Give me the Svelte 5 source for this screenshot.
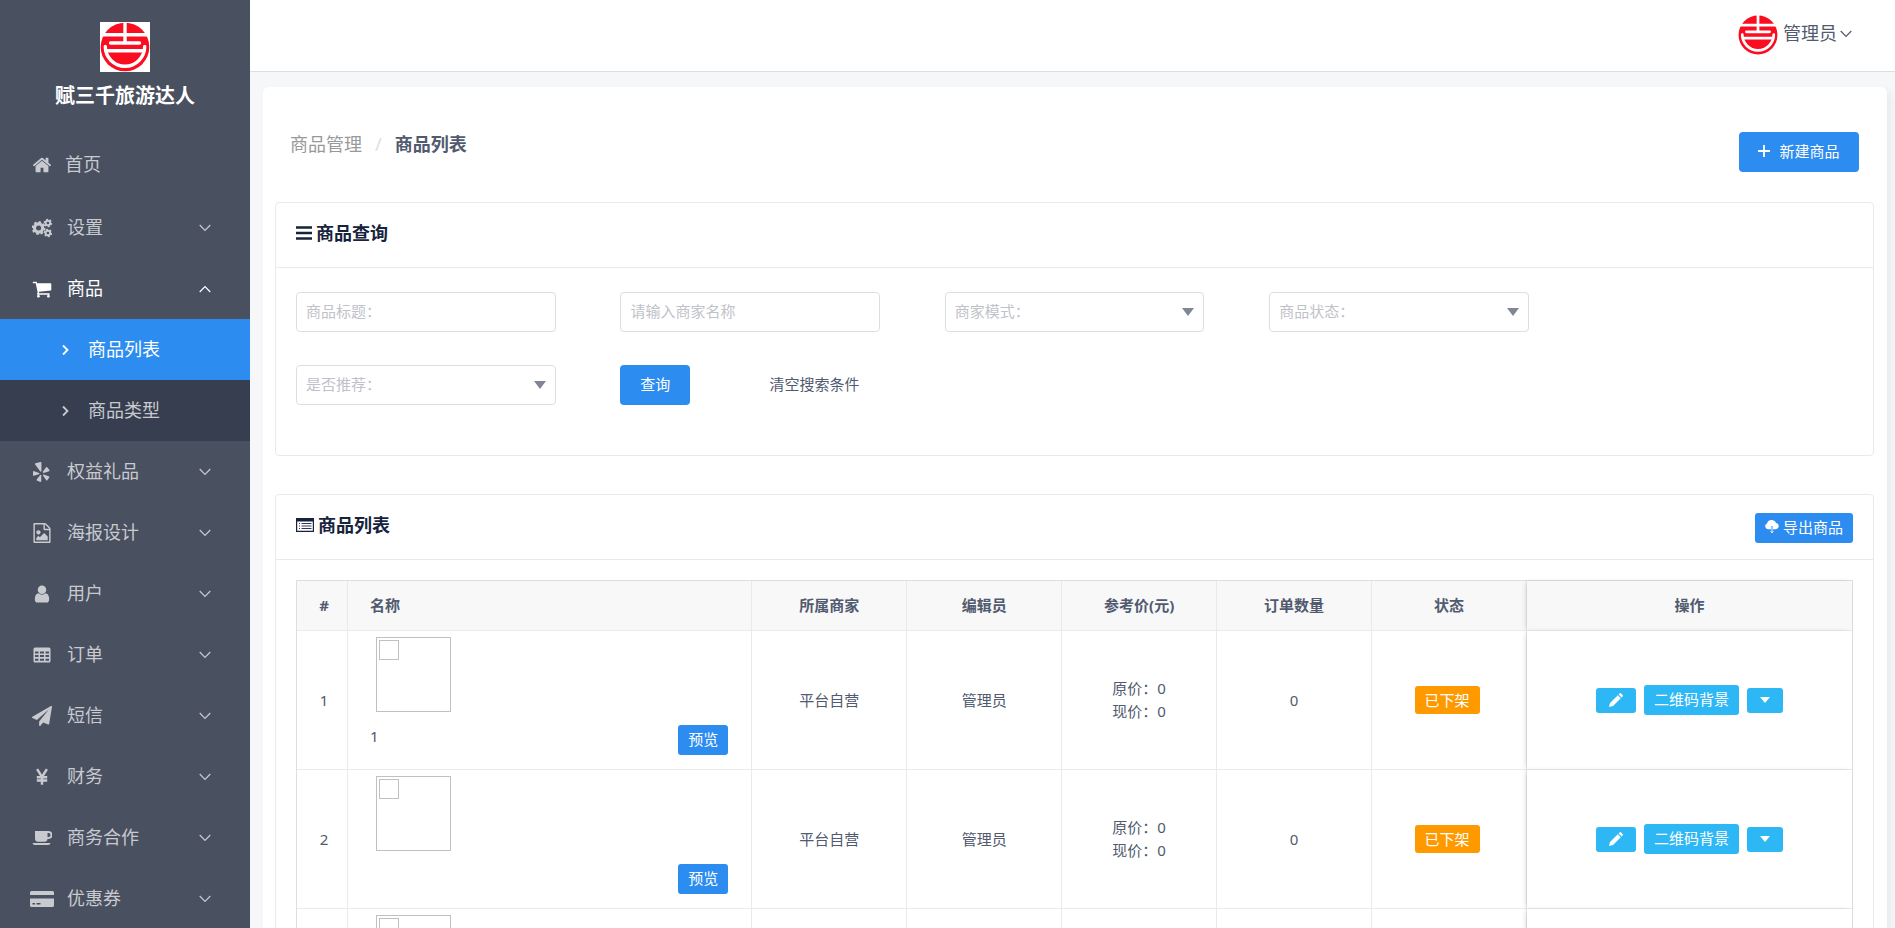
<script lang="ts">
  type MenuItem = { icon: string; label: string; open?: boolean; children?: string[] };

  const menu: MenuItem[] = [
    { icon: 'cogs', label: '设置' },
    { icon: 'cart', label: '商品', open: true, children: ['商品列表', '商品类型'] },
    { icon: 'yelp', label: '权益礼品' },
    { icon: 'image', label: '海报设计' },
    { icon: 'user', label: '用户' },
    { icon: 'table', label: '订单' },
    { icon: 'plane', label: '短信' },
    { icon: 'yen', label: '财务' },
    { icon: 'coffee', label: '商务合作' },
    { icon: 'card', label: '优惠券' }
  ];

  let active = $state('商品列表');
  let title = $state('');
  let merchant = $state('');
  let mode = $state('');
  let status = $state('');
  let recommend = $state('');

  const goods = [
    { id: 1, name: '1', shop: '平台自营', editor: '管理员', price: 0, now: 0, orders: 0, status: '已下架' },
    { id: 2, name: '', shop: '平台自营', editor: '管理员', price: 0, now: 0, orders: 0, status: '已下架' },
    { id: 3, name: '', shop: '平台自营', editor: '管理员', price: 0, now: 0, orders: 0, status: '已下架' }
  ];

  function resetSearch() {
    title = '';
    merchant = '';
    mode = '';
    status = '';
    recommend = '';
  }
</script>

{#snippet logo()}
  <svg viewBox="0 0 50 50" aria-hidden="true">
    <circle cx="25" cy="25" r="24.3" fill="#fb0d20" />
    <g fill="none" stroke="#fff" stroke-width="3.4">
      <path d="M25 0v20M1 12.7h48" />
      <path d="M10.5 21h29M7 28.800h36" stroke-linecap="round" />
      <path d="M5.300 24.500a19.700 19.700 0 0 0 39.400 0" stroke-linecap="round" />
    </g>
  </svg>
{/snippet}

{#snippet chevron(up: boolean)}
  <svg class="chevron" viewBox="0 0 12 8" aria-hidden="true">
    <path d={up ? 'M.7 7 6 1.500 11.300 7' : 'M.7 1 6 6.500 11.300 1'} fill="none" stroke="currentColor" stroke-width="1.200" />
  </svg>
{/snippet}

{#snippet select(id: string, label: string, value: string, set: (v: string) => void, options: string[])}
  <div class="field">
    <select {id} aria-label={label} {value} onchange={(e) => set(e.currentTarget.value)}>
      <option value="">{label}</option>
      {#each options as opt}
        <option>{opt}</option>
      {/each}
    </select>
    <svg class="caret" viewBox="0 0 12 8" aria-hidden="true"><path d="M0 0h12L6 8z" fill="#808695" /></svg>
  </div>
{/snippet}

{#snippet icon(name: string)}
  {#if name === 'home'}
    <svg viewBox="0 0 1792 1792"><path d="M1472 992v480q0 26-19 45t-45 19h-384v-384h-256v384h-384q-26 0-45-19t-19-45v-480q0-1 .5-3t.5-3l575-474 575 474q1 2 1 6zm223-69l-62 74q-8 9-21 11h-3q-13 0-21-7l-692-577-692 577q-12 8-24 7-13-2-21-11l-62-74q-8-10-7-23.500t11-21.500l719-599q32-26 76-26t76 26l244 204v-195q0-14 9-23t23-9h192q14 0 23 9t9 23v408l219 182q10 8 11 21.500t-7 23.500z" /></svg>
  {:else if name === 'cogs'}
    <svg viewBox="0 0 20 18">
      <g fill="none" stroke="currentColor">
        <circle cx="6.600" cy="9" r="4.100" stroke-width="3.200" />
        <circle cx="6.600" cy="9" r="6" stroke-width="1.800" pathLength="16" stroke-dasharray="1.100 .900" />
        <circle cx="15.900" cy="4" r="2.300" stroke-width="1.900" />
        <circle cx="15.900" cy="4" r="3.600" stroke-width="1.200" pathLength="12" stroke-dasharray="1.100 .900" />
        <circle cx="15.900" cy="14" r="2.300" stroke-width="1.900" />
        <circle cx="15.900" cy="14" r="3.600" stroke-width="1.200" pathLength="12" stroke-dasharray="1.100 .900" />
      </g>
    </svg>
  {:else if name === 'cart'}
    <svg viewBox="0 0 1792 1792"><path d="M704 1536q0 52-38 90t-90 38-90-38-38-90 38-90 90-38 90 38 38 90zm896 0q0 52-38 90t-90 38-90-38-38-90 38-90 90-38 90 38 38 90zm128-1088v512q0 24-16.500 42.500t-40.500 21.500l-1044 122q13 60 13 70 0 16-24 64h920q26 0 45 19t19 45-19 45-45 19h-1024q-26 0-45-19t-19-45q0-11 8-31.500t16-36 21.500-40 15.500-29.500l-177-823h-204q-26 0-45-19t-19-45 19-45 45-19h256q16 0 28.500 6.500t19.500 15.500 13 24.500 8 26 5.500 29.500 4.500 26h1201q26 0 45 19t19 45z" /></svg>
  {:else if name === 'yelp'}
    <svg viewBox="1 0 17 18">
      <path d="M3.600 1.200 8 0q1-.1 1 .9v7q-.2 1.300-1.200.4L3.200 2q-.2-.6.400-.8z" />
      <path d="M2 8.200 6.800 10q1 .6 0 1.100L2.200 12.400q-.8 0-.8-.8V8.800q.1-.6.600-.6z" />
      <path d="M8.800 12v5.300q-.1.700-.9.600l-3-1.200q-.6-.4-.2-1l3.200-4q.8-.6.900.3z" />
      <path d="m10.900 11.300 4.700 1.600q.7.300.4 1l-1.700 2.600q-.5.500-1 0l-2.900-4.300q-.3-1 .5-.9z" />
      <path d="m10.200 8.800 3-4q.5-.5 1 0l2 2.500q.3.700-.3 1l-4.800 1.500q-1.200 0-.9-1z" />
    </svg>
  {:else if name === 'image'}
    <svg viewBox="0 0 1792 1792"><path d="M1596 380q28 28 48 76t20 88v1152q0 40-28 68t-68 28h-1344q-40 0-68-28t-28-68v-1600q0-40 28-68t68-28h896q40 0 88 20t76 48zm-444-244v376h376q-10-29-22-41l-313-313q-12-12-41-22zm384 1528v-1024h-416q-40 0-68-28t-28-68v-416h-768v1536h1280zm-128-448v320h-1024v-192l192-192 128 128 384-384zm-832-192q-80 0-136-56t-56-136 56-136 136-56 136 56 56 136-56 136-136 56z" /></svg>
  {:else if name === 'user'}
    <svg viewBox="0 0 1792 1792"><path d="M1536 1399q0 109-62.500 187t-150.500 78h-854q-88 0-150.500-78t-62.500-187q0-85 8.500-160.500t31.500-152 58.500-131 94-89 134.500-34.500q131 128 313 128t313-128q76 0 134.500 34.500t94 89 58.500 131 31.500 152 8.500 160.500zm-256-887q0 159-112.500 271.500t-271.500 112.500-271.500-112.500-112.500-271.500 112.500-271.500 271.500-112.500 271.500 112.500 112.500 271.500z" /></svg>
  {:else if name === 'table'}
    <svg viewBox="-1 -1 20 20"><path fill-rule="evenodd" d="M2 1.500h14A1.500 1.500 0 0 1 17.500 3v12a1.500 1.500 0 0 1-1.500 1.500H2A1.500 1.500 0 0 1 .5 15V3A1.500 1.500 0 0 1 2 1.500zM2 5.500v2h3.500v-2zm5 0v2h4v-2zm5.500 0v2H16v-2zM2 9v2h3.500V9zm5 0v2h4V9zm5.500 0v2H16V9zM2 12.800v2h3.500v-2zm5 0v2h4v-2zm5.500 0v2H16v-2z" /></svg>
  {:else if name === 'plane'}
    <svg viewBox="0 0 1792 1792"><path d="M1764 11q33 24 27 64l-256 1536q-5 29-32 45-14 8-31 8-11 0-24-5l-453-185-242 295q-18 23-49 23-13 0-22-4-19-7-30.500-23.500t-11.500-36.500v-349l864-1059-1069 925-395-162q-37-14-40-55-2-40 32-59l1664-960q15-9 32-9 20 0 36 11z" /></svg>
  {:else if name === 'yen'}
    <svg viewBox="0 0 18 18"><path d="m4.600 2 4.400 7 4.400-7M9 8.500V16M4.300 9.300h9.400M4.300 12.200h9.400" fill="none" stroke="currentColor" stroke-width="2.200" /></svg>
  {:else if name === 'coffee'}
    <svg viewBox="0 0 20 18"><path fill-rule="evenodd" d="M3 2h13.500a3.900 3.900 0 0 1 0 8h-1a3 3 0 0 1-3 2.700H6A3 3 0 0 1 3 9.800zm12.500 2v4h1a2 2 0 0 0 0-4zM.5 14h18q0 2-2.500 2H3Q.5 16 .5 14z" /></svg>
  {:else if name === 'card'}
    <svg class="card-icon" viewBox="0 0 24 18"><path fill-rule="evenodd" d="M1.500 1h21A1.500 1.500 0 0 1 24 2.500V5H0V2.500A1.500 1.500 0 0 1 1.500 1zM0 8.500h24v7a1.500 1.500 0 0 1-1.500 1.500h-21A1.500 1.500 0 0 1 0 15.500zM2.500 13v1.500H5V13zm4 0v1.500h4V13z" /></svg>
  {/if}
{/snippet}

<div class="layout">
  <aside class="sider">
    <div class="brand">
      <span class="brand-logo">{@render logo()}</span>
      <strong>赋三千旅游达人</strong>
    </div>
    <nav>
      <a class="item home" href="#home">
        <span class="icon">{@render icon('home')}</span>首页
      </a>
      {#each menu as m}
        <a class="item" class:open={m.open} href="#menu">
          <span class="icon">{@render icon(m.icon)}</span>{m.label}
          {@render chevron(!!m.open)}
        </a>
        {#if m.open && m.children}
          {#each m.children as child}
            <a class="sub" class:active={active === child} href="#goods" onclick={() => (active = child)}>
              <svg viewBox="0 0 7 12" aria-hidden="true"><path d="m1 1.500 4.500 4.500L1 10.500" fill="none" stroke="currentColor" stroke-width="1.800" /></svg>
              {child}
            </a>
          {/each}
        {/if}
      {/each}
    </nav>
  </aside>

  <div class="main">
    <header class="topbar">
      <button class="account" type="button">
        <span class="avatar">{@render logo()}</span>
        <span class="account-name">管理员{@render chevron(false)}</span>
      </button>
    </header>

    <main class="page">
      <div class="page-head">
        <div class="crumb">
          <a href="#goods">商品管理</a>
          <span class="sep">/</span>
          <strong>商品列表</strong>
        </div>
        <button class="btn create" type="button">
          <svg viewBox="0 0 12 12" aria-hidden="true"><path d="M6 0v12M0 6h12" stroke="#fff" stroke-width="1.800" /></svg>
          新建商品
        </button>
      </div>

      <section class="panel search">
        <div class="panel-head">
          <h2>
            <svg class="bars" viewBox="0 0 16 14" aria-hidden="true"><path d="M0 1.500h16M0 7h16M0 12.500h16" stroke="currentColor" stroke-width="2.600" /></svg>
            商品查询
          </h2>
        </div>
        <form class="form" onsubmit={(e) => e.preventDefault()}>
          <div class="field">
            <input type="text" aria-label="商品标题" placeholder="商品标题：" bind:value={title} />
          </div>
          <div class="field">
            <input type="text" aria-label="商家名称" placeholder="请输入商家名称" bind:value={merchant} />
          </div>
          {@render select('mode', '商家模式：', mode, (v) => (mode = v), ['自营', '入驻'])}
          {@render select('status', '商品状态：', status, (v) => (status = v), ['已上架', '已下架'])}
          {@render select('recommend', '是否推荐：', recommend, (v) => (recommend = v), ['是', '否'])}
          <div class="actions">
            <button class="btn query" type="submit">查询</button>
            <button class="reset" type="button" onclick={resetSearch}>清空搜索条件</button>
          </div>
        </form>
      </section>

      <section class="panel">
        <div class="panel-head">
          <h2>
            <svg class="list-icon" viewBox="0 0 18 14" aria-hidden="true">
              <path d="M.6.600h16.800v12.800H.6z" fill="none" stroke="currentColor" stroke-width="1.200" />
              <path d="M0 0h18v3.500H0z" fill="currentColor" />
              <path d="M3 5.500h1M5.500 5.500h10M3 8h1M5.500 8h10M3 10.500h1M5.500 10.500h10" stroke="currentColor" stroke-width=".900" />
            </svg>
            商品列表
          </h2>
          <button class="btn small" type="button">
            <svg class="cloud" viewBox="0 0 14 14" aria-hidden="true">
              <path d="M3 9.300A3.100 3.100 0 0 1 2 3.400 4.900 4.900 0 0 1 11.200 3 3.200 3.200 0 0 1 11 9.300H7.500V6h-1v3.300z" fill="#fff" />
              <path d="M7 9v4M5.500 11.300 7 12.800l1.500-1.500" fill="none" stroke="#fff" stroke-width=".900" />
            </svg>
            导出商品
          </button>
        </div>
        <div class="table-wrap">
          <table>
            <colgroup>
              <col class="c-index" />
              <col class="c-name" />
              <col /><col /><col /><col /><col />
              <col class="c-op" />
            </colgroup>
            <thead>
              <tr>
                <th class="index">#</th>
                <th class="name">名称</th>
                <th>所属商家</th>
                <th>编辑员</th>
                <th>参考价(元)</th>
                <th>订单数量</th>
                <th>状态</th>
                <th class="fixed">操作</th>
              </tr>
            </thead>
            <tbody>
              {#each goods as g (g.id)}
                <tr>
                  <td class="index">{g.id}</td>
                  <td class="name">
                    <div class="thumb"><span></span></div>
                    <div class="name-row">
                      <span>{g.name}</span>
                      <button class="btn small" type="button">预览</button>
                    </div>
                  </td>
                  <td>{g.shop}</td>
                  <td>{g.editor}</td>
                  <td>
                    <div>原价：{g.price}</div>
                    <div>现价：{g.now}</div>
                  </td>
                  <td>{g.orders}</td>
                  <td><span class="tag">{g.status}</span></td>
                  <td class="fixed">
                    <div class="ops">
                      <button class="btn info mini" type="button" aria-label="编辑">
                        <svg class="pencil" viewBox="0 0 14 14" aria-hidden="true"><path d="M0 14l1-4 7.800-7.800 3 3L4 13zM9.600 1.400l1-1q.7-.7 1.500 0l1.500 1.500q.7.800 0 1.500l-1 1z" fill="#fff" /></svg>
                      </button>
                      <button class="btn info small" type="button">二维码背景</button>
                      <button class="btn info mini" type="button" aria-label="更多">
                        <svg class="more" viewBox="0 0 10 6" aria-hidden="true"><path d="M0 0h10L5 6z" fill="#fff" /></svg>
                      </button>
                    </div>
                  </td>
                </tr>
              {/each}
            </tbody>
          </table>
        </div>
      </section>
    </main>
  </div>
</div>

<style>
  :global(body) {
    margin: 0;
    background: #f5f7f9;
  }

  .layout {
    display: flex;
    height: 100vh;
    overflow: hidden;
    font-family: "Noto Sans", "Noto Sans CJK SC", sans-serif;
    font-size: 15px;
    line-height: 23px;
    color: #515a6e;
  }

  .layout * {
    box-sizing: border-box;
  }

  a {
    color: inherit;
    text-decoration: none;
  }

  button,
  input,
  select {
    font: inherit;
    margin: 0;
  }

  button {
    cursor: pointer;
  }

  svg {
    display: block;
    flex: none;
  }

  /* sidebar */
  .sider {
    flex: none;
    width: 250px;
    background: #495060;
    color: #c8cad0;
    overflow-y: auto;
    scrollbar-width: none;
  }

  .brand {
    display: flex;
    flex-direction: column;
    align-items: center;
    gap: 9px;
    height: 134px;
    padding-top: 22px;
    font-size: 20px;
    line-height: 30px;
    color: #fff;
  }

  .brand-logo {
    width: 50px;
    height: 50px;
    background: #fff;
  }

  .item,
  .sub {
    display: flex;
    align-items: center;
    height: 61px;
    font-size: 18px;
  }

  .item {
    gap: 13px;
    padding: 0 39px 0 30px;
  }

  .item.home {
    gap: 11px;
    margin-bottom: 2px;
  }

  .item.open {
    color: #fff;
  }

  .icon {
    display: flex;
    justify-content: center;
    width: 24px;
  }

  .icon svg {
    width: 20px;
    height: 20px;
    fill: currentColor;
  }

  .icon svg.card-icon {
    width: 24px;
    height: 18px;
  }

  .chevron {
    width: 12px;
    height: 8px;
  }

  .item .chevron {
    margin-left: auto;
  }

  .sub {
    gap: 19px;
    padding-left: 62px;
    background: #363e4f;
  }

  .sub svg {
    width: 7px;
    height: 12px;
  }

  .sub.active {
    background: #2d8cf0;
    color: #fff;
  }

  /* top bar */
  .main {
    flex: 1;
    min-width: 0;
    overflow-y: auto;
    scrollbar-width: none;
  }

  .topbar {
    display: flex;
    justify-content: flex-end;
    height: 72px;
    padding: 15px 43px 0 0;
    background: #fff;
    border-bottom: 1px solid #dcdee2;
  }

  .account {
    display: flex;
    align-items: center;
    gap: 5px;
    height: 40px;
    padding: 0;
    border: 0;
    background: none;
    font-size: 18px;
    color: #515a6e;
  }

  .account-name {
    display: flex;
    align-items: center;
    gap: 3px;
    padding-bottom: 3px;
  }

  .avatar {
    width: 40px;
    height: 40px;
  }

  /* content */
  .page {
    margin: 15px 8px 0 13px;
    padding: 45px 13px 24px 12px;
    background: #fff;
    border-radius: 6px;
    box-shadow: 4px 4px 10px rgba(0, 0, 0, 0.06);
  }

  .page-head {
    display: flex;
    justify-content: space-between;
    align-items: flex-start;
    height: 70px;
    padding: 0 15px;
  }

  .crumb {
    display: flex;
    gap: 13px;
    font-size: 18px;
    line-height: 24px;
  }

  .crumb a {
    color: #999;
  }

  .sep {
    color: #dcdee2;
  }

  .btn {
    display: inline-flex;
    align-items: center;
    justify-content: center;
    gap: 9px;
    height: 40px;
    padding: 0 19px 2px;
    border: 0;
    border-radius: 4px;
    background: #2d8cf0;
    color: #fff;
    white-space: nowrap;
  }

  .btn.create {
    width: 120px;
  }

  .btn.small {
    gap: 4px;
    height: 30px;
    padding: 0 10px 2px;
    border-radius: 3px;
  }

  .btn.info {
    background: #2db7f5;
  }

  .btn.mini {
    height: 25px;
    padding: 0 13px;
    border-radius: 3px;
  }

  .create svg {
    width: 12px;
    height: 12px;
  }

  .panel {
    border: 1px solid #e8eaec;
    border-radius: 4px;
  }

  .search {
    margin-bottom: 38px;
  }

  .panel-head {
    display: flex;
    justify-content: space-between;
    align-items: flex-start;
    height: 65px;
    padding: 18px 20px 0;
    border-bottom: 1px solid #e8eaec;
  }

  h2 {
    display: flex;
    align-items: center;
    gap: 4px;
    margin: 0;
    font-size: 18px;
    line-height: 24px;
    color: #17233d;
  }

  .bars {
    width: 16px;
    height: 14px;
  }

  .list-icon {
    width: 18px;
    height: 14px;
  }

  .cloud {
    width: 14px;
    height: 14px;
  }

  .form {
    display: grid;
    grid-template-columns: repeat(4, 5fr) 4fr;
    row-gap: 33px;
    padding: 24px 20px 50px;
  }

  .form .field:nth-child(5) {
    grid-column: 1;
  }

  .field {
    position: relative;
    width: 80%;
  }

  .field input,
  .field select {
    display: block;
    width: 100%;
    height: 40px;
    padding: 0 9px 2px;
    border: 1px solid #dcdee2;
    border-radius: 4px;
    background: #fff;
    color: #bfc2c9;
    appearance: none;
    outline: none;
  }

  .field input::placeholder {
    color: #bfc2c9;
    opacity: 1;
  }

  .caret {
    position: absolute;
    top: 16px;
    right: 10px;
    width: 12px;
    height: 8px;
    pointer-events: none;
  }

  .actions {
    display: flex;
    gap: 64px;
  }

  .btn.query {
    width: 70px;
  }

  .reset {
    padding: 0 15px 2px;
    border: 0;
    background: none;
    color: #515a6e;
    white-space: nowrap;
  }

  /* table */
  .table-wrap {
    margin: 20px;
    border: 1px solid #dcdee2;
    border-bottom: 0;
  }

  table {
    width: 100%;
    table-layout: fixed;
    border-collapse: separate;
    border-spacing: 0;
  }

  .c-index {
    width: 51px;
  }

  .c-name {
    width: 26%;
  }

  .c-op {
    width: 325px;
  }

  th,
  td {
    padding: 0;
    border-right: 1px solid #e8eaec;
    border-bottom: 1px solid #e8eaec;
    text-align: center;
    background: #fff;
  }

  th {
    height: 50px;
    background: #f8f8f9;
  }

  td {
    height: 139px;
  }

  th.index,
  td.index {
    padding-left: 4px;
  }

  th.name,
  td.name {
    padding: 0 23px 0 22px;
    text-align: left;
  }

  th.fixed,
  td.fixed {
    position: relative;
    border-right: 0;
    box-shadow: -2px 0 6px -2px rgba(0, 0, 0, 0.2);
  }

  .thumb {
    width: 75px;
    height: 75px;
    margin: 0 0 13px 6px;
    padding: 2px;
    border: 1px solid #c0c0c0;
  }

  .thumb span {
    display: block;
    width: 20px;
    height: 20px;
    border: 1px solid #c0c0c0;
  }

  .name-row {
    display: flex;
    justify-content: space-between;
    height: 38px;
  }

  .tag {
    display: inline-block;
    height: 28px;
    margin-right: 4px;
    padding: 0 10px;
    border-radius: 3px;
    background: #f90;
    color: #fff;
    line-height: 28px;
  }

  .ops {
    display: flex;
    align-items: center;
    justify-content: center;
    gap: 8px;
  }

  .pencil {
    width: 14px;
    height: 14px;
  }

  .more {
    width: 10px;
    height: 6px;
  }
</style>
